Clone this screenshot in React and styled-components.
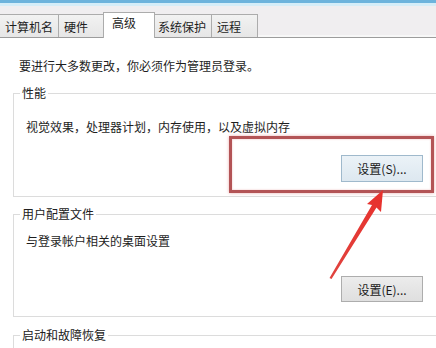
import styled, { createGlobalStyle } from 'styled-components';

const GlobalStyle = createGlobalStyle`
  html, body {
    margin: 0;
    padding: 0;
    background: #ffffff;
  }
  body {
    font-family: "Noto Sans CJK SC", "Microsoft YaHei", sans-serif;
    font-size: 12px;
    color: #1e1e1e;
  }
`;

const tabs = [
  { label: '计算机名' },
  { label: '硬件' },
  { label: '高级', active: true },
  { label: '系统保护' },
  { label: '远程' },
];

const Window = styled.div`
  position: relative;
  width: 436px;
  height: 348px;
  overflow: hidden;
  background: #ffffff;
`;

const TitleEdge = styled.div`
  height: 3px;
  background: #6db3dc;
  border-bottom: 3px solid #d5edf8;
`;

const TabBar = styled.div`
  display: flex;
  align-items: flex-end;
  height: 31px;
  background: #f0eef0;
  border-bottom: 1px solid #9c9c9c;
  box-shadow: inset 0 -2px 0 #f7f7f7;
`;

const Tab = styled.div`
  box-sizing: border-box;
  min-width: ${(p) => (p.$active ? '52px' : '47px')};
  height: ${(p) => (p.$active ? '26px' : '23px')};
  margin: ${(p) => (p.$active ? '0 -2px -1px -2px' : '0 0 0 -1px')};
  padding: ${(p) => (p.$active ? '2px 8px 0 8px' : '4px 5px 0 5px')};
  border: 1px solid #acacac;
  border-bottom: none;
  background: ${(p) =>
    p.$active ? '#ffffff' : 'linear-gradient(#f2f2f2, #e6e6e6)'};
  position: relative;
  z-index: ${(p) => (p.$active ? 2 : 1)};
  font-size: 12px;
  line-height: 16px;
  white-space: nowrap;
  &:first-child {
    margin-left: 0;
    border-left: none;
  }
`;

const Body = styled.div`
  padding: 20px 0 0 13px;
`;

const Notice = styled.div`
  line-height: 16px;
  padding-left: 6px;
  margin-bottom: 11px;
`;

const Group = styled.fieldset`
  box-sizing: border-box;
  width: 433px;
  margin: 0 0 ${(p) => p.$after || 0}px 0;
  padding: ${(p) => p.$top}px 22px 14px 12px;
  border: 1px solid #dcdcdc;
  min-width: 0;
`;

const Legend = styled.legend`
  padding: 0 2px;
  margin-left: -6px;
  line-height: 16px;
  font-size: 12px;
  color: #202020;
`;

const Description = styled.div`
  line-height: 16px;
`;

const ButtonRow = styled.div`
  display: flex;
  justify-content: flex-end;
  margin-top: ${(p) => p.$top}px;
`;

const Button = styled.div`
  box-sizing: border-box;
  width: 82px;
  height: ${(p) => p.$h}px;
  display: flex;
  align-items: center;
  justify-content: center;
  font-size: 12px;
  color: #1a1a1a;
  border: 1px solid ${(p) => (p.$focused ? '#9fb9cc' : '#adadad')};
  background: ${(p) =>
    p.$focused
      ? 'linear-gradient(#ebf2f7, #dde8f0)'
      : 'linear-gradient(#ececec, #dfdfdf)'};
`;

const Highlight = styled.div`
  position: absolute;
  left: 229px;
  top: 136px;
  width: 205px;
  height: 57px;
  box-sizing: border-box;
  border: 3px solid #b35456;
  box-shadow: 0 0 3px rgba(220, 120, 120, 0.6),
    inset 0 0 2px rgba(220, 120, 120, 0.5);
  pointer-events: none;
`;

const ArrowLayer = styled.svg`
  position: absolute;
  left: 0;
  top: 0;
  pointer-events: none;
`;

const App = () => {
  return (
    <Window>
      <GlobalStyle />
      <TitleEdge />
      <TabBar>
        {tabs.map((t) => (
          <Tab key={t.label} $active={t.active}>
            {t.label}
          </Tab>
        ))}
      </TabBar>
      <Body>
        <Notice>要进行大多数更改，你必须作为管理员登录。</Notice>

        <Group $top={18} $after={9}>
          <Legend>性能</Legend>
          <Description>视觉效果，处理器计划，内存使用，以及虚拟内存</Description>
          <ButtonRow $top={20}>
            <Button $focused $h={27}>设置(S)...</Button>
          </ButtonRow>
        </Group>

        <Group $top={11} $after={10}>
          <Legend>用户配置文件</Legend>
          <Description>与登录帐户相关的桌面设置</Description>
          <ButtonRow $top={27}>
            <Button $h={26}>设置(E)...</Button>
          </ButtonRow>
        </Group>

        <Group $top={12}>
          <Legend>启动和故障恢复</Legend>
          <Description>&nbsp;</Description>
        </Group>
      </Body>

      <Highlight />
      <ArrowLayer width="436" height="348" viewBox="0 0 436 348">
        <defs>
          <linearGradient id="arrowFill" x1="0" y1="1" x2="1" y2="0">
            <stop offset="0" stopColor="#e0443f" />
            <stop offset="1" stopColor="#e8302c" />
          </linearGradient>
        </defs>
        <polygon
          points="383,190 381,212 376.5,207.5 331.5,279 329.5,278 372,205 367,204"
          fill="url(#arrowFill)"
        />
      </ArrowLayer>
    </Window>
  );
};

export default App;
